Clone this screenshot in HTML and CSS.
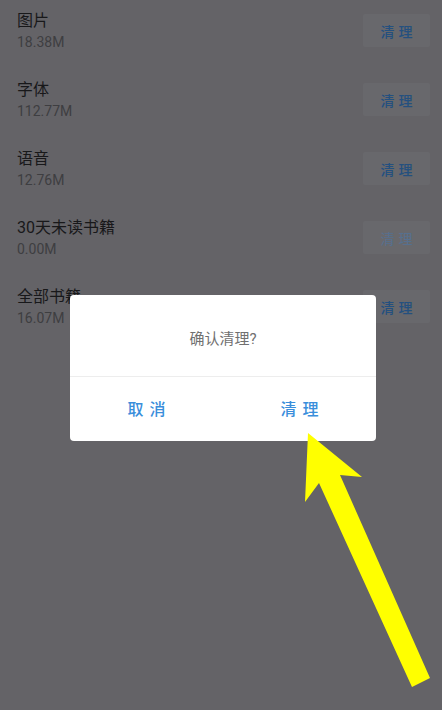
FILE: index.html
```html
<!DOCTYPE html>
<html>
<head>
    <title>清理缓存</title>
    <meta name="viewport" content="width=device-width, initial-scale=1.0">
    <meta charset="utf-8">
    <link rel="stylesheet" href="styles.css">
</head>

<body>
    <div class="list">
        <div class="row">
            <div class="info">
                <div class="name">图片</div>
                <div class="size">18.38M</div>
            </div>
            <div class="btn">清理</div>
        </div>
        <div class="row">
            <div class="info">
                <div class="name">字体</div>
                <div class="size">112.77M</div>
            </div>
            <div class="btn">清理</div>
        </div>
        <div class="row">
            <div class="info">
                <div class="name">语音</div>
                <div class="size">12.76M</div>
            </div>
            <div class="btn">清理</div>
        </div>
        <div class="row">
            <div class="info">
                <div class="name">30天未读书籍</div>
                <div class="size">0.00M</div>
            </div>
            <div class="btn disabled">清理</div>
        </div>
        <div class="row">
            <div class="info">
                <div class="name">全部书籍</div>
                <div class="size">16.07M</div>
            </div>
            <div class="btn">清理</div>
        </div>
    </div>

    <div class="dialog">
        <div class="dialog-title">确认清理?</div>
        <div class="dialog-actions">
            <div class="action">取消</div>
            <div class="action">清理</div>
        </div>
    </div>

    <svg class="arrow" width="442" height="710" viewBox="0 0 442 710">
        <polygon fill="#ffff00" points="308,433 362,477 340,475 430,678 412,687 319,483 305,502"/>
    </svg>
</body>
</html>
```

FILE: styles.css
```css
*{
    box-sizing: border-box;
}

body{
    width: 442px;
    height: 710px;
    margin: 0;
    overflow: hidden;
    position: relative;
    background: #646367;
    font-family: Roboto, "Noto Sans CJK SC", sans-serif;
}

.list{
    display: flex;
    flex-direction: column;
    margin-top: -4px;
}

.row{
    display: flex;
    align-items: center;
    justify-content: space-between;
    height: 69px;
    padding: 0 12px 0 17px;
}

.info{
    display: flex;
    flex-direction: column;
}

.name{
    font-size: 16px;
    line-height: 22px;
    color: #18181a;
}

.size{
    font-size: 14px;
    line-height: 20px;
    color: #3e3e41;
}

.btn{
    display: flex;
    align-items: center;
    justify-content: center;
    width: 67px;
    height: 33px;
    background: #68686c;
    color: #24507f;
    font-size: 14px;
    font-weight: 500;
    letter-spacing: 4px;
    padding-left: 4px;
    border-radius: 2px;
}

.btn.disabled{
    color: #56708f;
    font-weight: 400;
}

.dialog{
    position: absolute;
    left: 70px;
    top: 295px;
    width: 306px;
    background: #ffffff;
    border-radius: 4px;
    display: flex;
    flex-direction: column;
}

.dialog-title{
    height: 82px;
    display: flex;
    align-items: center;
    justify-content: center;
    padding-top: 4px;
    font-size: 15px;
    color: #707070;
    border-bottom: 1px solid #ededed;
}

.dialog-actions{
    display: flex;
    height: 64px;
}

.action{
    flex: 1;
    display: flex;
    align-items: center;
    justify-content: center;
    padding-left: 6px;
    padding-bottom: 2px;
    font-size: 16px;
    font-weight: 500;
    letter-spacing: 6px;
    color: #3a8edb;
}

.arrow{
    position: absolute;
    left: 0;
    top: 0;
}
```
